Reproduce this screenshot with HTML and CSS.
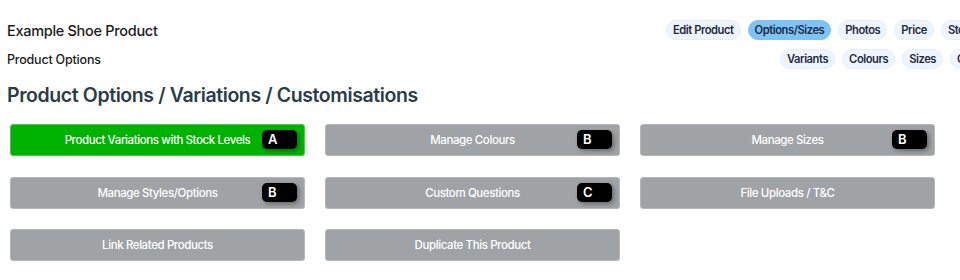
FILE: index.html
```html
<!DOCTYPE html>
<html lang="en">
<head>
    <meta charset="UTF-8">
    <title>Product Options</title>
    <link rel="stylesheet" href="styles.css">
</head>
<body>
<div id="page">
    <div class="head-row row-one">
        <h2 class="product-name">Example Shoe Product</h2>
        <ul class="pills">
            <li>Edit Product</li>
            <li class="on">Options/Sizes</li>
            <li>Photos</li>
            <li>Price</li>
            <li>Stock</li>
            <li>Shipping</li>
        </ul>
    </div>
    <div class="head-row row-two">
        <h3 class="section-name">Product Options</h3>
        <ul class="pills">
            <li>Variants</li>
            <li>Colours</li>
            <li>Sizes</li>
            <li>Options</li>
            <li>Questions</li>
        </ul>
    </div>
    <h1 class="page-title">Product Options / Variations / Customisations</h1>
    <div id="btn-grid">
        <a class="opt-btn green">Product Variations with Stock Levels<span class="tag">A</span></a>
        <a class="opt-btn">Manage Colours<span class="tag">B</span></a>
        <a class="opt-btn">Manage Sizes<span class="tag">B</span></a>
        <a class="opt-btn">Manage Styles/Options<span class="tag">B</span></a>
        <a class="opt-btn">Custom Questions<span class="tag">C</span></a>
        <a class="opt-btn">File Uploads / T&amp;C</a>
        <a class="opt-btn">Link Related Products</a>
        <a class="opt-btn">Duplicate This Product</a>
    </div>
</div>
</body>
</html>
```
FILE: styles.css
```css
* {
    margin: 0;
    padding: 0;
    box-sizing: border-box;
}
body {
    font-family: Inter, "Noto Sans", sans-serif;
    background: #fff;
    color: #1b1b1b;
    overflow: hidden;
}
ul {
    list-style: none;
}
#page {
    width: 960px;
    padding: 20px 0 0 7px;
    overflow: hidden;
}
.head-row {
    display: grid;
    align-items: center;
}
.row-one {
    grid-template-columns: 659px 1fr;
    height: 20px;
}
.row-two {
    grid-template-columns: 773px 1fr;
    height: 20px;
    margin-top: 9px;
}
.product-name {
    font-size: 14.5px;
    font-weight: 500;
    letter-spacing: -0.3px;
}
.section-name {
    font-size: 12.5px;
    font-weight: 500;
    letter-spacing: -0.2px;
}
.pills {
    display: flex;
    gap: 7px;
    white-space: nowrap;
}
.pills > li {
    flex: none;
    height: 20px;
    line-height: 18px;
    padding: 0 6px;
    border: 1px solid #e2eefb;
    border-radius: 10px;
    background-color: #eef5fe;
    color: #1f2a44;
    font-size: 11.2px;
    font-weight: 600;
    letter-spacing: -0.45px;
    cursor: pointer;
}
.pills > li.on {
    background-color: #7cc3f6;
    border-color: #7cc3f6;
}
.page-title {
    margin-top: 14px;
    font-size: 19.5px;
    font-weight: 600;
    color: #2b3d48;
    letter-spacing: -0.4px;
}
#btn-grid {
    display: grid;
    grid-template-columns: repeat(3, 295px);
    grid-auto-rows: 32px;
    column-gap: 20px;
    row-gap: 20.5px;
    margin: 17px 0 0 3px;
}
.opt-btn {
    position: relative;
    display: flex;
    align-items: center;
    justify-content: center;
    border: 1px solid #b4b8ba;
    border-radius: 3px;
    background-color: #9fa3a5;
    color: #fff;
    font-size: 11.5px;
    font-weight: 500;
    letter-spacing: -0.4px;
    cursor: pointer;
}
.opt-btn.green {
    background-color: #00b200;
    border-color: #4cc94c;
}
.tag {
    position: absolute;
    top: 5px;
    right: 7px;
    width: 35px;
    height: 19px;
    padding-left: 6px;
    line-height: 19px;
    border-radius: 5px;
    background-color: #000;
    color: #fff;
    font-size: 13px;
    font-weight: 600;
    letter-spacing: 0;
    box-shadow: 2px 2px 4px rgba(0, 0, 0, 0.35);
}
```
